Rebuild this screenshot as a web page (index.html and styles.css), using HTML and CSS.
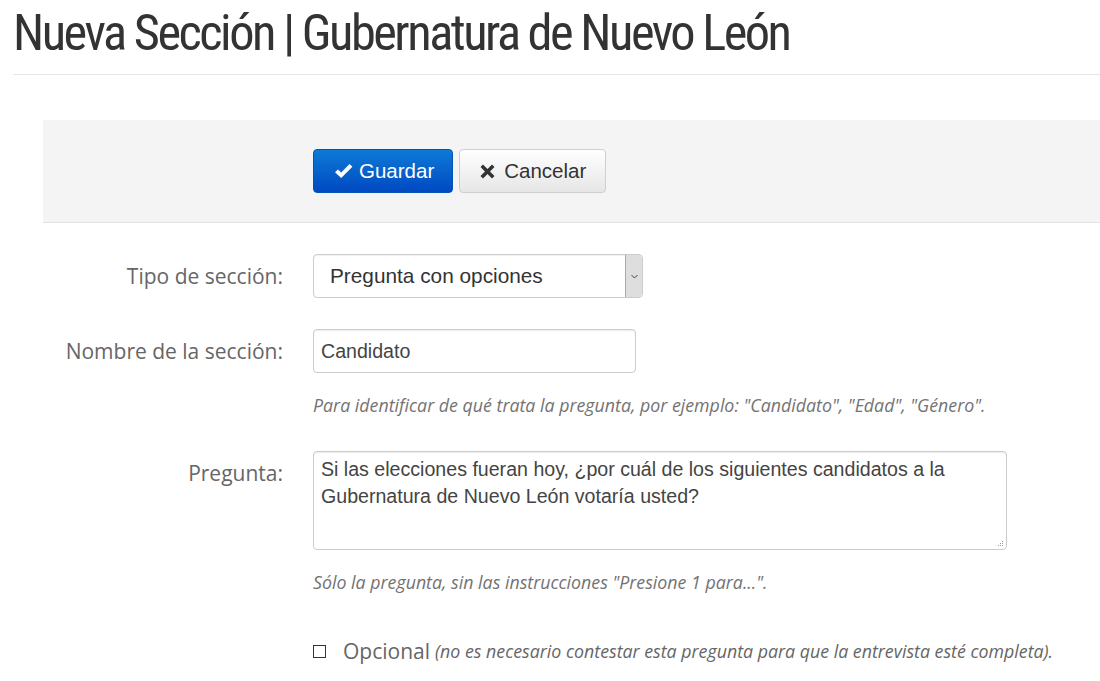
FILE: index.html
```html
<!DOCTYPE html>
<html lang="es">
<head>
<meta charset="utf-8">
<title>Nueva Sección</title>
<link rel="stylesheet" href="styles.css">
</head>
<body>
<div class="page">
  <h1 class="title">Nueva Sección | Gubernatura de Nuevo León</h1>
  <form class="form">
    <div class="toolbar">
      <button type="button" class="btn btn-primary">
        <svg class="icon-ok" width="19" height="16" viewBox="0 0 19 16"><path d="M1 9.2 L4 6.4 L7.2 9.6 L15.6 1 L18.4 3.8 L7.2 15 Z" fill="#fff"/></svg>
        <span>Guardar</span>
      </button>
      <button type="button" class="btn btn-default">
        <svg class="icon-x" width="15" height="15" viewBox="0 0 15 15"><path d="M3 0.5 L7.5 5 L12 0.5 L14.5 3 L10 7.5 L14.5 12 L12 14.5 L7.5 10 L3 14.5 L0.5 12 L5 7.5 L0.5 3 Z" fill="#333"/></svg>
        <span>Cancelar</span>
      </button>
    </div>

    <div class="row row-first">
      <label class="label">Tipo de sección:</label>
      <div class="control">
        <div class="select">
          <span class="select-text">Pregunta con opciones</span>
          <span class="select-arrow"><svg width="7" height="5" viewBox="0 0 7 5"><path d="M0.5 1 L3.5 4 L6.5 1" fill="none" stroke="#444" stroke-width="1"/></svg></span>
        </div>
      </div>
    </div>

    <div class="row row-next">
      <label class="label">Nombre de la sección:</label>
      <div class="control">
        <input class="input" type="text" value="Candidato">
        <p class="help">Para identificar de qué trata la pregunta, por ejemplo: "Candidato", "Edad", "Género".</p>
      </div>
    </div>

    <div class="row row-question">
      <label class="label">Pregunta:</label>
      <div class="control">
        <textarea class="textarea">Si las elecciones fueran hoy, ¿por cuál de los siguientes candidatos a la Gubernatura de Nuevo León votaría usted?</textarea>
        <p class="help">Sólo la pregunta, sin las instrucciones "Presione 1 para...".</p>
      </div>
    </div>

    <div class="row row-check">
      <div></div>
      <div class="control check-line">
        <span class="checkbox"></span>
        <span class="check-label">Opcional</span>
        <em class="check-note">(no es necesario contestar esta pregunta para que la entrevista esté completa).</em>
      </div>
    </div>
  </form>
</div>
</body>
</html>
```

FILE: styles.css
```css
html, body {
  margin: 0;
  padding: 0;
  background: #fff;
}
body {
  font-family: "Open Sans", "Liberation Sans", sans-serif;
  color: #333;
  overflow: hidden;
}
.page {
  padding-left: 13px;
}
.title {
  margin: 0;
  padding: 5px 0 14px 0;
  font-family: Roboto, "Liberation Sans Narrow", sans-serif;
  font-stretch: 75%;
  font-weight: 400;
  font-size: 50.4px;
  line-height: 55px;
  letter-spacing: -2.5px;
  color: #333;
  border-bottom: 1px solid #e5e5e5;
  white-space: nowrap;
}
.form {
  margin: 45px 0 0 30px;
}
.toolbar {
  display: flex;
  gap: 6px;
  padding: 29px 0 29px 270px;
  background: #f4f4f4;
  border-bottom: 1px solid #e3e3e3;
}
.btn {
  display: inline-flex;
  align-items: center;
  gap: 6px;
  height: 44px;
  padding: 0 18px 0 20px;
  font-family: "Liberation Sans", Arial, sans-serif;
  font-size: 20.5px;
  border-radius: 4px;
  box-sizing: border-box;
}
.btn-primary {
  color: #fff;
  background: linear-gradient(to bottom, #0d7ad6 0%, #0049c2 100%);
  border: 1px solid #0352b8;
}
.btn-default {
  color: #333;
  padding-right: 19px;
  background: linear-gradient(to bottom, #ffffff 0%, #e6e6e6 100%);
  border: 1px solid #cfcfcf;
}
.icon-x {
  margin-right: 3px;
}
.row {
  display: grid;
  grid-template-columns: 240px 1fr;
  column-gap: 30px;
}
.row-first {
  margin-top: 31px;
}
.row-next {
  margin-top: 31px;
}
.row-question {
  margin-top: 35px;
}
.row-check {
  margin-top: 44px;
}
.label {
  text-align: right;
  font-size: 21px;
  line-height: 44px;
  color: #666;
}
.select {
  display: flex;
  width: 330px;
  height: 44px;
  box-sizing: border-box;
  border: 1px solid #ccc;
  border-radius: 4px;
  background: #fff;
  box-shadow: inset 0 1px 1px rgba(0,0,0,0.06);
}
.select-text {
  flex: 1;
  padding-left: 16px;
  font-family: "Liberation Sans", Arial, sans-serif;
  font-size: 20.8px;
  line-height: 42px;
  color: #333;
}
.select-arrow {
  width: 16px;
  display: flex;
  align-items: center;
  justify-content: center;
  background: #dedede;
  border-left: 1px solid #a9a9a9;
  border-radius: 0 3px 3px 0;
}
.input,
.textarea {
  display: block;
  box-sizing: border-box;
  border: 1px solid #ccc;
  border-radius: 4px;
  font-family: "Liberation Sans", Arial, sans-serif;
  font-size: 19.6px;
  color: #444;
  box-shadow: inset 0 1px 1px rgba(0,0,0,0.075);
  outline: none;
  margin: 0;
}
.input {
  width: 323px;
  height: 44px;
  padding: 0 7px;
}
.textarea {
  width: 694px;
  height: 99px;
  padding: 4px 7px;
  line-height: 27px;
  resize: none;
  background: #fff url("data:image/svg+xml,%3Csvg xmlns='http://www.w3.org/2000/svg' width='6' height='6'%3E%3Crect x='4' y='0' width='1' height='1' fill='%23999'/%3E%3Crect x='2' y='2' width='1' height='1' fill='%23999'/%3E%3Crect x='4' y='2' width='1' height='1' fill='%23999'/%3E%3Crect x='0' y='4' width='1' height='1' fill='%23999'/%3E%3Crect x='2' y='4' width='1' height='1' fill='%23999'/%3E%3Crect x='4' y='4' width='1' height='1' fill='%23999'/%3E%3C/svg%3E") no-repeat right 2px bottom 2px;
}
.help {
  margin: 21px 0 0;
  font-size: 17.8px;
  line-height: 22px;
  font-style: italic;
  color: #737373;
}
.check-line {
  display: flex;
  align-items: center;
  line-height: 28px;
}
.checkbox {
  width: 11px;
  height: 11px;
  border: 1px solid #333;
  background: #fff;
  margin-right: 17px;
  flex: none;
}
.check-label {
  font-size: 21px;
  color: #666;
  margin-right: 5px;
}
.check-note {
  font-size: 17.8px;
  color: #666;
}
```
